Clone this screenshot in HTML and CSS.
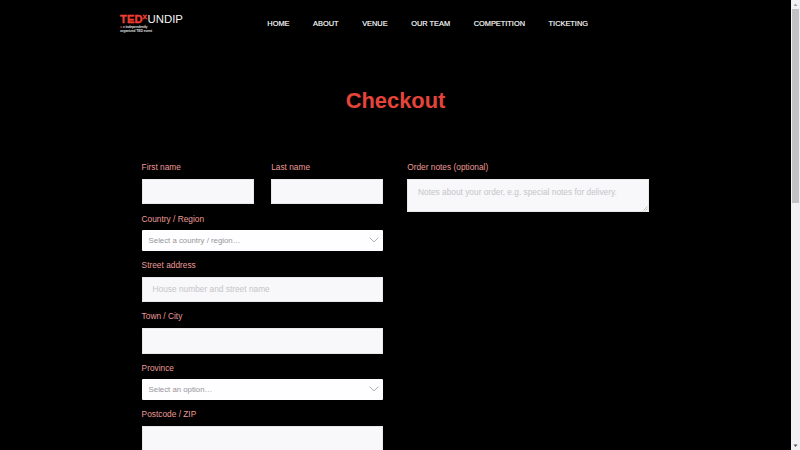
FILE: index.html
```html
<!DOCTYPE html>
<html lang="en">
<head>
<meta charset="utf-8">
<title>Checkout - TEDxUNDIP</title>
<link rel="stylesheet" href="styles.css">
</head>
<body>
<div class="window">
  <div class="page">
    <header class="header">
      <a class="logo">
        <span class="brand"><b>TED</b><b class="x">x</b><span class="undip">UNDIP</span></span>
        <span class="tagline"><i>x</i> = independently<br>organized TED event</span>
      </a>
      <nav class="nav"><a>HOME</a><a>ABOUT</a><a>VENUE</a><a>OUR TEAM</a><a>COMPETITION</a><a>TICKETING</a></nav>
    </header>
    <h1 class="title">Checkout</h1>
    <main class="checkout">
      <section class="column">
        <div class="names">
          <div class="row"><div class="label">First name</div><div class="input"></div></div>
          <div class="row"><div class="label">Last name</div><div class="input"></div></div>
        </div>
        <div class="row">
          <div class="label">Country / Region</div>
          <div class="select"><span>Select a country / region…</span><svg class="chevron" viewBox="0 0 10 6"><path d="M.7 .7 5 4.9 9.3 .7"/></svg></div>
        </div>
        <div class="row"><div class="label">Street address</div><div class="input"><span>House number and street name</span></div></div>
        <div class="row"><div class="label">Town / City</div><div class="input"></div></div>
        <div class="row">
          <div class="label">Province</div>
          <div class="select"><span>Select an option…</span><svg class="chevron" viewBox="0 0 10 6"><path d="M.7 .7 5 4.9 9.3 .7"/></svg></div>
        </div>
        <div class="row"><div class="label">Postcode / ZIP</div><div class="input"></div></div>
      </section>
      <section class="column">
        <div class="row">
          <div class="label">Order notes (optional)</div>
          <div class="input notes"><span>Notes about your order, e.g. special notes for delivery.</span><svg class="grip" viewBox="0 0 5 5"><path d="M.5 4.5 4.5 .5M2.7 4.5 4.5 2.7"/></svg></div>
        </div>
      </section>
    </main>
  </div>
  <div class="scrollbar">
    <svg class="arrow" viewBox="0 0 9 9"><path class="dim" d="M2.5 6 4.5 3.5 6.5 6z"/></svg>
    <div class="track"><div class="thumb"></div></div>
    <svg class="arrow" viewBox="0 0 9 9"><path d="M2.5 3.5h4L4.5 6z"/></svg>
  </div>
</div>
</body>
</html>
```
FILE: styles.css
```css
* { box-sizing: border-box; }
body { margin: 0; background: #000; font-family: "Liberation Sans", Arial, sans-serif; overflow: hidden; }
.window { display: flex; height: 450px; overflow: hidden; }
.page { flex: 1; overflow: hidden; background: #000; }
.header { display: flex; height: 48px; padding-left: 120px; }
.logo { width: 147.3px; padding-top: 13px; }
.brand { display: flex; height: 13px; line-height: 13px; font-size: 11.2px; color: #f4f4f4; }
.brand b { color: #ef3e33; letter-spacing: .05px; -webkit-text-stroke: .35px #ef3e33; }
.brand .x { font-size: 8px; line-height: 8px; margin-right: .5px; }
.undip { font-size: 11.4px; letter-spacing: 0; }
.tagline { display: block; font-size: 3.6px; line-height: 3.8px; font-weight: bold; letter-spacing: -.18px; color: #ddd; white-space: nowrap; }
.tagline i { color: #ef3e33; font-style: normal; }
.nav { display: flex; gap: 23.6px; height: 47px; align-items: center; font-size: 7.4px; color: #fff; white-space: nowrap; -webkit-text-stroke: .15px #fff; }
.title { margin: 39.6px 0 0; height: 26px; line-height: 26px; font-size: 21.9px; color: #e5443b; text-align: center; }
.checkout { display: flex; gap: 23.8px; padding: 45.6px 0 0 141.6px; }
.column { width: 241.8px; flex: none; }
.names { display: flex; gap: 17.4px; }
.names .row { flex: 1; }
.row { padding-bottom: 6.1px; }
.label { height: 16px; line-height: 16px; margin-bottom: 3.5px; font-size: 8.33px; color: #eb9b97; white-space: nowrap; }
.input { height: 25.8px; display: flex; align-items: center; padding: 0 10px 1px; background: #f8f7fa; border: 1px solid #e9e8ea; font-size: 8.33px; color: #c6c5c7; white-space: nowrap; }
.select { height: 20.9px; display: flex; align-items: center; justify-content: space-between; padding: 0 4px 0 7px; background: #fefdff; border-radius: 1px; font-size: 7.8px; color: #969598; }
.chevron { width: 10px; height: 6px; margin-bottom: 2px; fill: none; stroke: #a5a4a6; stroke-width: .9; }
.notes { position: relative; height: 33.5px; align-items: flex-start; padding: 7px 9.8px; }
.grip { position: absolute; right: 0; bottom: 0; width: 5px; height: 5px; stroke: #999; stroke-width: .6; }
.scrollbar { width: 9px; background: #f1f0f2; display: flex; flex-direction: column; }
.arrow { width: 9px; height: 9px; fill: #555; }
.dim { fill: #a2a1a3; }
.track { flex: 1; padding: 0 1px; }
.thumb { height: 194px; background: #c1c0c2; }
```
